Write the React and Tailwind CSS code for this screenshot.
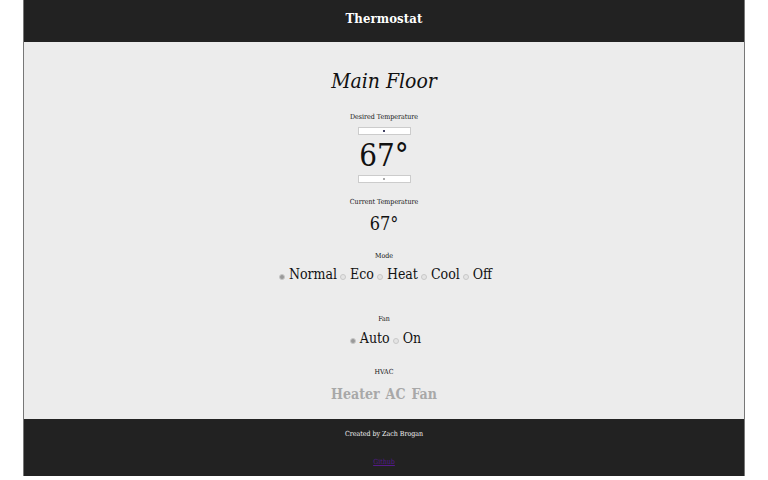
import React from "react";

const F = { fontFamily: '"DejaVu Serif", "Liberation Serif", serif' };

function Radio({ checked }) {
  return (
    <span className={`inline-block w-[6px] h-[6px] rounded-full border border-[#c8c8c8] ${checked ? "bg-[#999]" : "bg-[#e4e4e4]"} mr-[4px] ml-[3px] translate-y-[3px]`}></span>
  );
}

export default function App() {
  return (
    <div className="w-[768px] h-[480px] bg-white font-stretch-condensed" style={F}>
      <div className="mx-[23px] w-[722px] h-[476px] flex flex-col border-x border-[#777]">
        <header className="h-[42px] bg-[#222] flex items-center justify-center">
          <span className="text-white font-bold text-[13px] tracking-[0.1px] -translate-y-[2px]">Thermostat</span>
        </header>
        <main className="flex-1 bg-[#ececec] flex flex-col items-center text-[#111]">
          <div className="mt-[26px] h-[26px] text-[21px] italic leading-[26px]">Main Floor</div>
          <div className="mt-[18px] text-[7px] leading-[10px]">Desired Temperature</div>
          <div className="mt-[5px] w-[53px] h-[8px] bg-white border border-[#ccc] flex items-center justify-center">
            <span className="w-[2px] h-[2px] bg-[#446]"></span>
          </div>
          <div className="mt-[0px] h-[40px] text-[31px] leading-[40px]">67°</div>
          <div className="mt-[0px] w-[53px] h-[8px] bg-white border border-[#ccc] flex items-center justify-center">
            <span className="w-[2px] h-[2px] bg-[#aaa]"></span>
          </div>
          <div className="mt-[14px] text-[7px] leading-[10px]">Current Temperature</div>
          <div className="mt-[4px] h-[26px] text-[18px] leading-[26px]">67°</div>
          <div className="mt-[14px] text-[7px] leading-[10px]">Mode</div>
          <div className="mt-[4px] flex items-center text-[14px] leading-[18px]">
            <Radio checked />Normal<Radio />Eco<Radio />Heat<Radio />Cool<Radio />Off
          </div>
          <div className="mt-[31px] text-[7px] leading-[10px]">Fan</div>
          <div className="mt-[5px] flex items-center text-[14px] leading-[18px]">
            <Radio checked />Auto<Radio />On
          </div>
          <div className="mt-[20px] text-[7px] leading-[10px]">HVAC</div>
          <div className="mt-[8px] flex gap-[6px] text-[14px] leading-[18px] text-[#a8a8a8] font-bold">
            <span>Heater</span><span>AC</span><span>Fan</span>
          </div>
        </main>
        <footer className="h-[57px] bg-[#222] flex flex-col items-center">
          <div className="mt-[10px] text-[#f2f2f2] text-[7px] leading-[10px]">Created by Zach Brogan</div>
          <a href="#" className="mt-[18px] text-[7px] leading-[10px] text-[#551a8b] underline">Github</a>
        </footer>
      </div>
    </div>
  );
}
